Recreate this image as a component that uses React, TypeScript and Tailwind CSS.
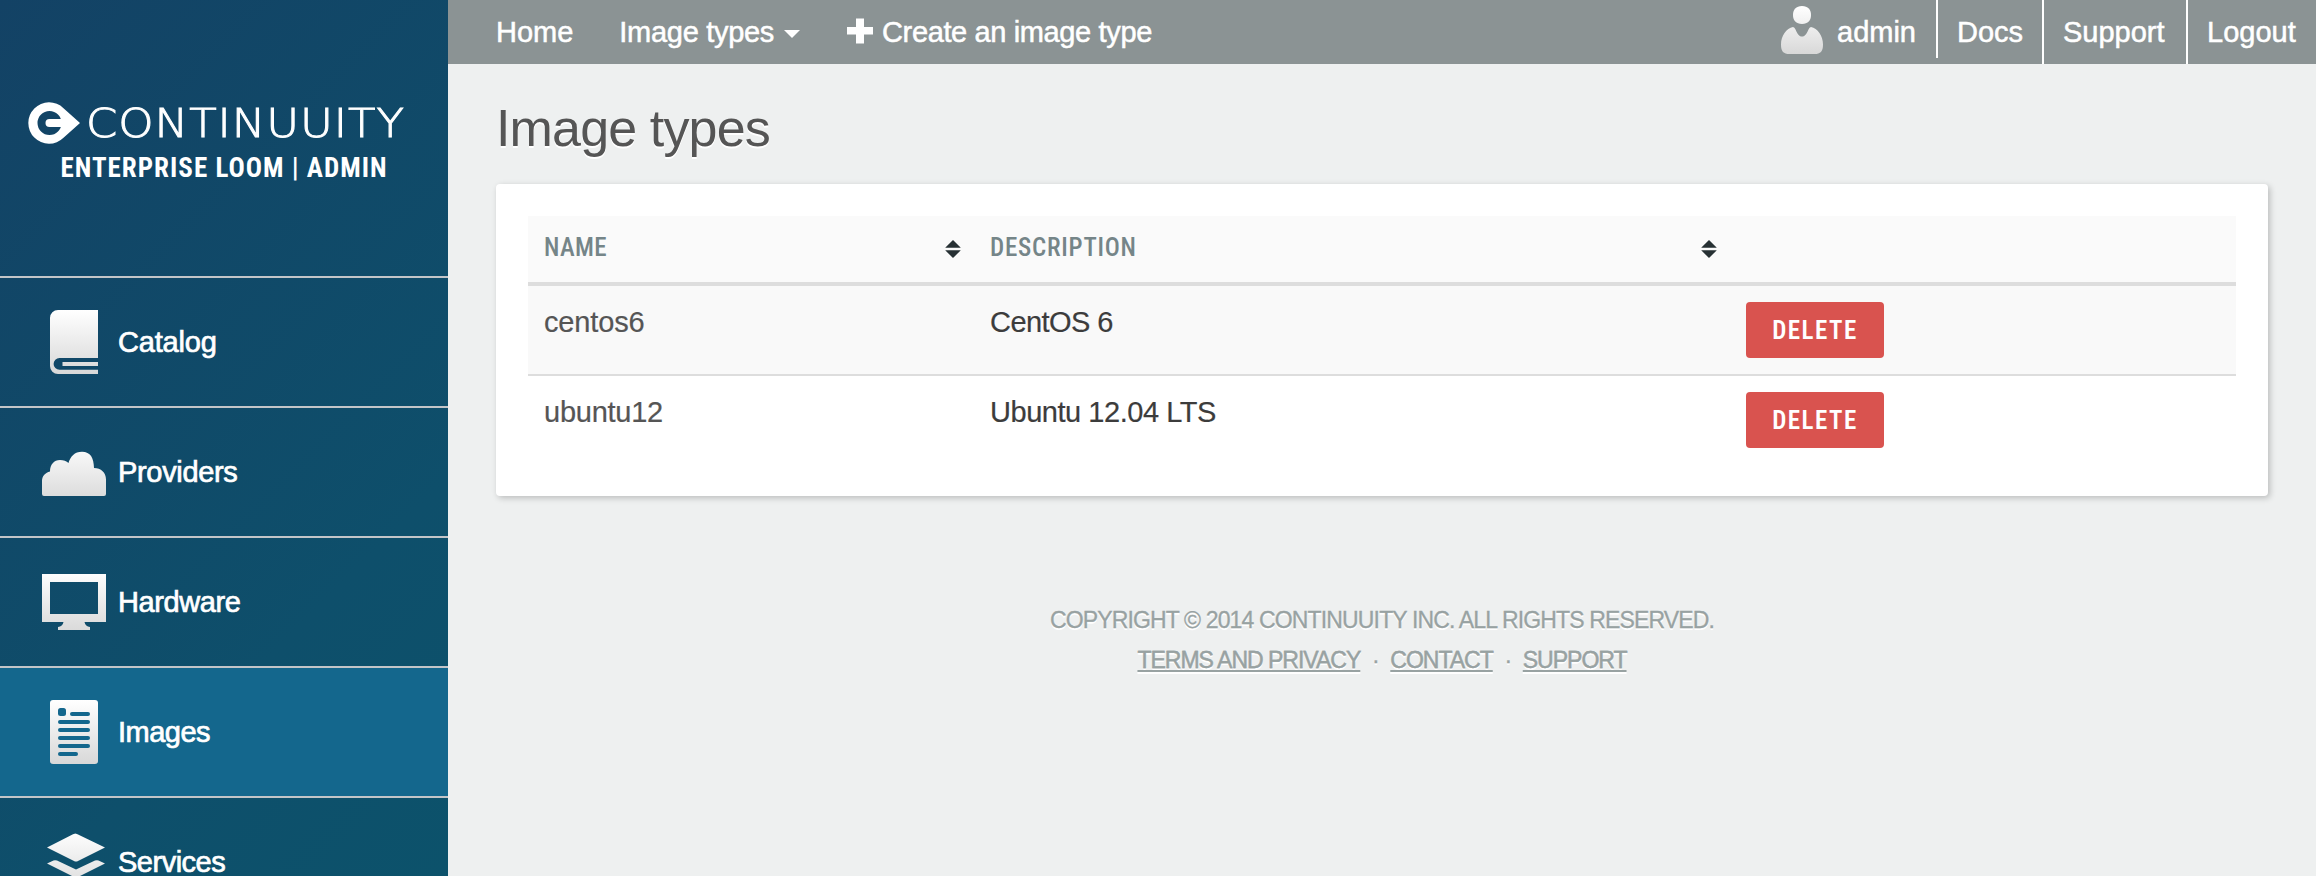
import type { ReactNode } from "react";

const SANS = "font-['Liberation_Sans',Arial,sans-serif]";
const CONDENSED = "font-['Roboto_Condensed','Roboto',sans-serif]";

function NavIcon({ id, children }: { id: string; children: ReactNode }) {
  return (
    <svg className="size-16 shrink-0 overflow-visible" viewBox="0 0 64 64" fill={`url(#${id})`}>
      <defs>
        <linearGradient id={id} gradientUnits="userSpaceOnUse" x1="0" y1="0" x2="0" y2="64">
          <stop offset="0" stopColor="#ffffff" />
          <stop offset="1" stopColor="#d8d8d8" />
        </linearGradient>
      </defs>
      {children}
    </svg>
  );
}

function BookIcon() {
  return (
    <NavIcon id="book">
      <path d="M16 0H56V48H17.5a5.8 5.8 0 0 0 0 11.8H56V64H16a8 8 0 0 1-8-8V8a8 8 0 0 1 8-8z" />
      <path d="M20.5 52H56v4H20.5z" />
    </NavIcon>
  );
}

function CloudIcon() {
  return (
    <NavIcon id="cloud">
      <path d="M2 56a2 2 0 0 1-2-2V41C0 36 3.500 32.500 8 31.500C8 24.500 12 20 18 20C21.500 20 24.500 21 26.500 23C28.500 16.500 32.500 11.800 40 11.800C48.500 11.800 51.800 18 52 28C59 28 64 32.500 64 39.500V54a2 2 0 0 1-2 2z" />
    </NavIcon>
  );
}

function MonitorIcon() {
  return (
    <NavIcon id="monitor">
      <path
        fillRule="evenodd"
        d="M0 4H64V52H42.500C43 55 45 56.500 48 57V60H16V57C19 56.500 21 55 21.500 52H0zM8 12V44H56V12z"
      />
    </NavIcon>
  );
}

function DocumentIcon() {
  return (
    <NavIcon id="document">
      <rect x="8" y="0" width="48" height="64" rx="3" />
      <g fill="#14678d">
        <rect x="16" y="8" width="8" height="8" rx="2.500" />
        <rect x="28" y="12" width="20" height="4" rx="2" />
        <rect x="16" y="20" width="32" height="4" rx="2" />
        <rect x="16" y="28" width="32" height="4" rx="2" />
        <rect x="16" y="36" width="32" height="4" rx="2" />
        <rect x="16" y="44" width="32" height="4" rx="2" />
        <rect x="16" y="52" width="20" height="4" rx="2" />
      </g>
    </NavIcon>
  );
}

function LayersIcon() {
  return (
    <NavIcon id="layers">
      <path d="M33 3.500Q34 3.500 35.500 4.300L63 17.500L36 31Q34 32 32 31L5 17.500L31 4.300Q32.500 3.500 34 3.500z" />
      <path d="M5 33.500L11.500 30.500Q13 29.800 15 30.600L34 39.500L53 30.600Q55 29.800 56.500 30.500L63 33.500L36 47Q34 48 32 47z" />
      <path d="M5 49.500L11.500 46.500L34 55.500L56.500 46.500L63 49.500L36 63Q34 64 32 63z" />
    </NavIcon>
  );
}

function UserIcon() {
  return (
    <svg className="h-12 w-[42px] shrink-0" viewBox="0 0 42 48" fill="url(#user)">
      <defs>
        <linearGradient id="user" gradientUnits="userSpaceOnUse" x1="0" y1="0" x2="0" y2="48">
          <stop offset="0" stopColor="#ffffff" />
          <stop offset="1" stopColor="#d8d8d8" />
        </linearGradient>
      </defs>
      <path d="M21 0C27 0 30 3.500 30 9S27 18 21 18S12 14.500 12 9S15 0 21 0z" />
      <path d="M12 21Q13.500 21 14.500 23.500C17 29 18.500 30.500 21 30.500S25 29 27.500 23.500Q28.500 21 30 21C36.500 22 42 30 42 38.500C42 45.500 39.500 48 33.500 48H8.500C2.500 48 0 45.500 0 38.500C0 30 5.500 22 12 21z" />
    </svg>
  );
}

function SortIcon() {
  return (
    <svg className="h-[18px] w-4" viewBox="0 0 16 18" fill="#263033">
      <path d="M8 0L15.800 7.700H.2zM.2 10.300H15.800L8 18z" />
    </svg>
  );
}

function LogoMark() {
  return (
    <svg className="h-[42px] w-[52px] shrink-0" viewBox="0 0 52 42" fill="#fff">
      <path
        fillRule="evenodd"
        d="M35.500 6.200L52 21L35.500 35.800A20.700 20.700 0 1 1 35.500 6.200zM21.500 9a12 12 0 1 0 0 24a12 12 0 0 0 0-24z"
      />
      <path d="M21.500 17H36V25H21.500a4 4 0 0 1 0-8z" />
    </svg>
  );
}

const NAV = [
  { label: "Catalog", icon: <BookIcon />, text: "tracking-[-0.2px]" },
  { label: "Providers", icon: <CloudIcon />, text: "tracking-[-0.33px]" },
  { label: "Hardware", icon: <MonitorIcon />, text: "tracking-[-0.4px]" },
  { label: "Images", icon: <DocumentIcon />, text: "tracking-[-0.5px]", active: true },
  { label: "Services", icon: <LayersIcon />, text: "tracking-[-0.5px]" },
];

const ROWS = [
  { name: "centos6", desc: "CentOS 6", nameCls: "tracking-[-0.15px]", descCls: "tracking-[-0.55px]", row: "bg-[#f9f9f9]" },
  { name: "ubuntu12", desc: "Ubuntu 12.04 LTS", nameCls: "tracking-[-0.25px]", descCls: "tracking-[-0.46px]", row: "border-t-2 border-[#dddddd]" },
];

function Sidebar() {
  return (
    <aside className="w-[448px] shrink-0 overflow-hidden bg-[linear-gradient(135deg,#134265_0%,#0e4f6b_70%,#0c526b_100%)] text-white">
      <div className="h-[276px] pt-[102px]">
        <div className="flex pl-7">
          <LogoMark />
          <span className="ml-[6px] mt-px origin-left scale-x-[1.17] text-[38.4px] font-extralight leading-[42px] tracking-[0.8px] [-webkit-text-stroke:0.9px_#fff] font-['DejaVu_Sans',sans-serif]">
            CONTINUUITY
          </span>
        </div>
        <div className={`text-center text-[27px] font-bold leading-[46px] tracking-[1px] ${CONDENSED}`}>
          ENTERPRISE LOOM | ADMIN
        </div>
      </div>
      <nav>
        {NAV.map((item) => (
          <a
            key={item.label}
            className={`flex h-[130px] items-center gap-3 border-t-2 border-[#c3c5c8] pl-[42px] ${item.active ? "bg-[#14678d]" : ""}`}
          >
            {item.icon}
            <span className={`text-[29px] leading-8 [-webkit-text-stroke:0.7px_#fff] ${item.text}`}>{item.label}</span>
          </a>
        ))}
      </nav>
    </aside>
  );
}

function TopBar() {
  return (
    <header className="flex h-16 items-center bg-[#8b9394] pl-12 text-[29px] leading-10 text-white [-webkit-text-stroke:0.5px_#fff]">
      <a>Home</a>
      <a className="ml-[46px] flex items-center tracking-[-0.3px]">
        Image types
        <svg className="ml-[10px] mt-1 h-2 w-4" viewBox="0 0 16 8" fill="#fff">
          <path d="M0 0H16L8 8z" />
        </svg>
      </a>
      <a className="ml-[47px] flex items-center tracking-[-0.37px]">
        <svg className="mr-[9px] size-[26px] -translate-y-px" viewBox="0 0 26 26" fill="#fff">
          <path d="M9 0.500H17V9H26V16.500H17V25.500H9V16.500H0V9H9z" />
        </svg>
        Create an image type
      </a>
      <div className="ml-auto flex h-full">
        <div className="flex items-center">
          <div className="mr-[14px] -mt-1">
            <UserIcon />
          </div>
          <span className="mr-[20px]">admin</span>
        </div>
        <div className="h-[58px] w-[106px] border-l-2 border-white pl-[19px] leading-16">Docs</div>
        <div className="w-[144px] border-l-2 border-white pl-[19px] leading-16">Support</div>
        <div className="w-[130px] border-l-2 border-white pl-[19px] leading-16">Logout</div>
      </div>
    </header>
  );
}

function ImageTable() {
  return (
    <div className="rounded-[4px] bg-white px-8 pb-8 pt-8 shadow-[2px_2px_6px_rgba(0,0,0,0.22)]">
      <div
        className={`grid h-[70px] grid-cols-[446px_756px_1fr] border-b-4 border-[#dddddd] bg-[#fafafa] text-[25px] font-medium text-[#758588] ${CONDENSED}`}
      >
        <div className="flex items-center justify-between pb-[2px] pl-4 pr-[13px] tracking-[0.3px]">
          NAME
          <div className="mt-[2px]"><SortIcon /></div>
        </div>
        <div className="flex items-center justify-between pb-[2px] pl-4 pr-[13px] tracking-[0.75px]">
          DESCRIPTION
          <div className="mt-[2px]"><SortIcon /></div>
        </div>
      </div>
      {ROWS.map((r) => (
        <div
          key={r.name}
          className={`grid grid-cols-[446px_756px_1fr] py-4 text-[29px] leading-10 ${r.row}`}
        >
          <div className={`pl-4 text-[#555555] [-webkit-text-stroke:0.2px_#555555] ${r.nameCls}`}>{r.name}</div>
          <div className={`pl-4 text-[#3c3c3c] [-webkit-text-stroke:0.2px_#3c3c3c] ${r.descCls}`}>{r.desc}</div>
          <div className="pl-4">
            <button
              className={`block h-14 w-[138px] rounded-[4px] bg-[#d9534f] text-center text-[25px] font-semibold leading-[55px] tracking-[1.5px] text-white ${CONDENSED}`}
            >
              DELETE
            </button>
          </div>
        </div>
      ))}
    </div>
  );
}

function Footer() {
  const link = "underline decoration-2 underline-offset-[2px]";
  return (
    <footer className="mt-[104px] text-center text-[23px] leading-10 text-[#98a2a2] [-webkit-text-stroke:0.3px_#98a2a2] [text-shadow:0_2px_0_#fff]">
      <p className="tracking-[-0.85px]">COPYRIGHT © 2014 CONTINUUITY INC. ALL RIGHTS RESERVED.</p>
      <p className="flex justify-center tracking-[-1px]">
        <a className={link}>TERMS AND PRIVACY</a>
        <span className="w-[30px]">·</span>
        <a className={link}>CONTACT</a>
        <span className="w-[30px]">·</span>
        <a className={link}>SUPPORT</a>
      </p>
    </footer>
  );
}

export default function App() {
  return (
    <div className={`flex h-[876px] w-full overflow-hidden bg-[#eef0f0] ${SANS}`}>
      <Sidebar />
      <div className="flex-1">
        <TopBar />
        <main className="px-12 pt-8">
          <h1 className="mb-6 text-[52px] leading-16 tracking-[-0.85px] text-[#555555] [text-shadow:0_2px_0_#fff]">
            Image types
          </h1>
          <ImageTable />
          <Footer />
        </main>
      </div>
    </div>
  );
}
